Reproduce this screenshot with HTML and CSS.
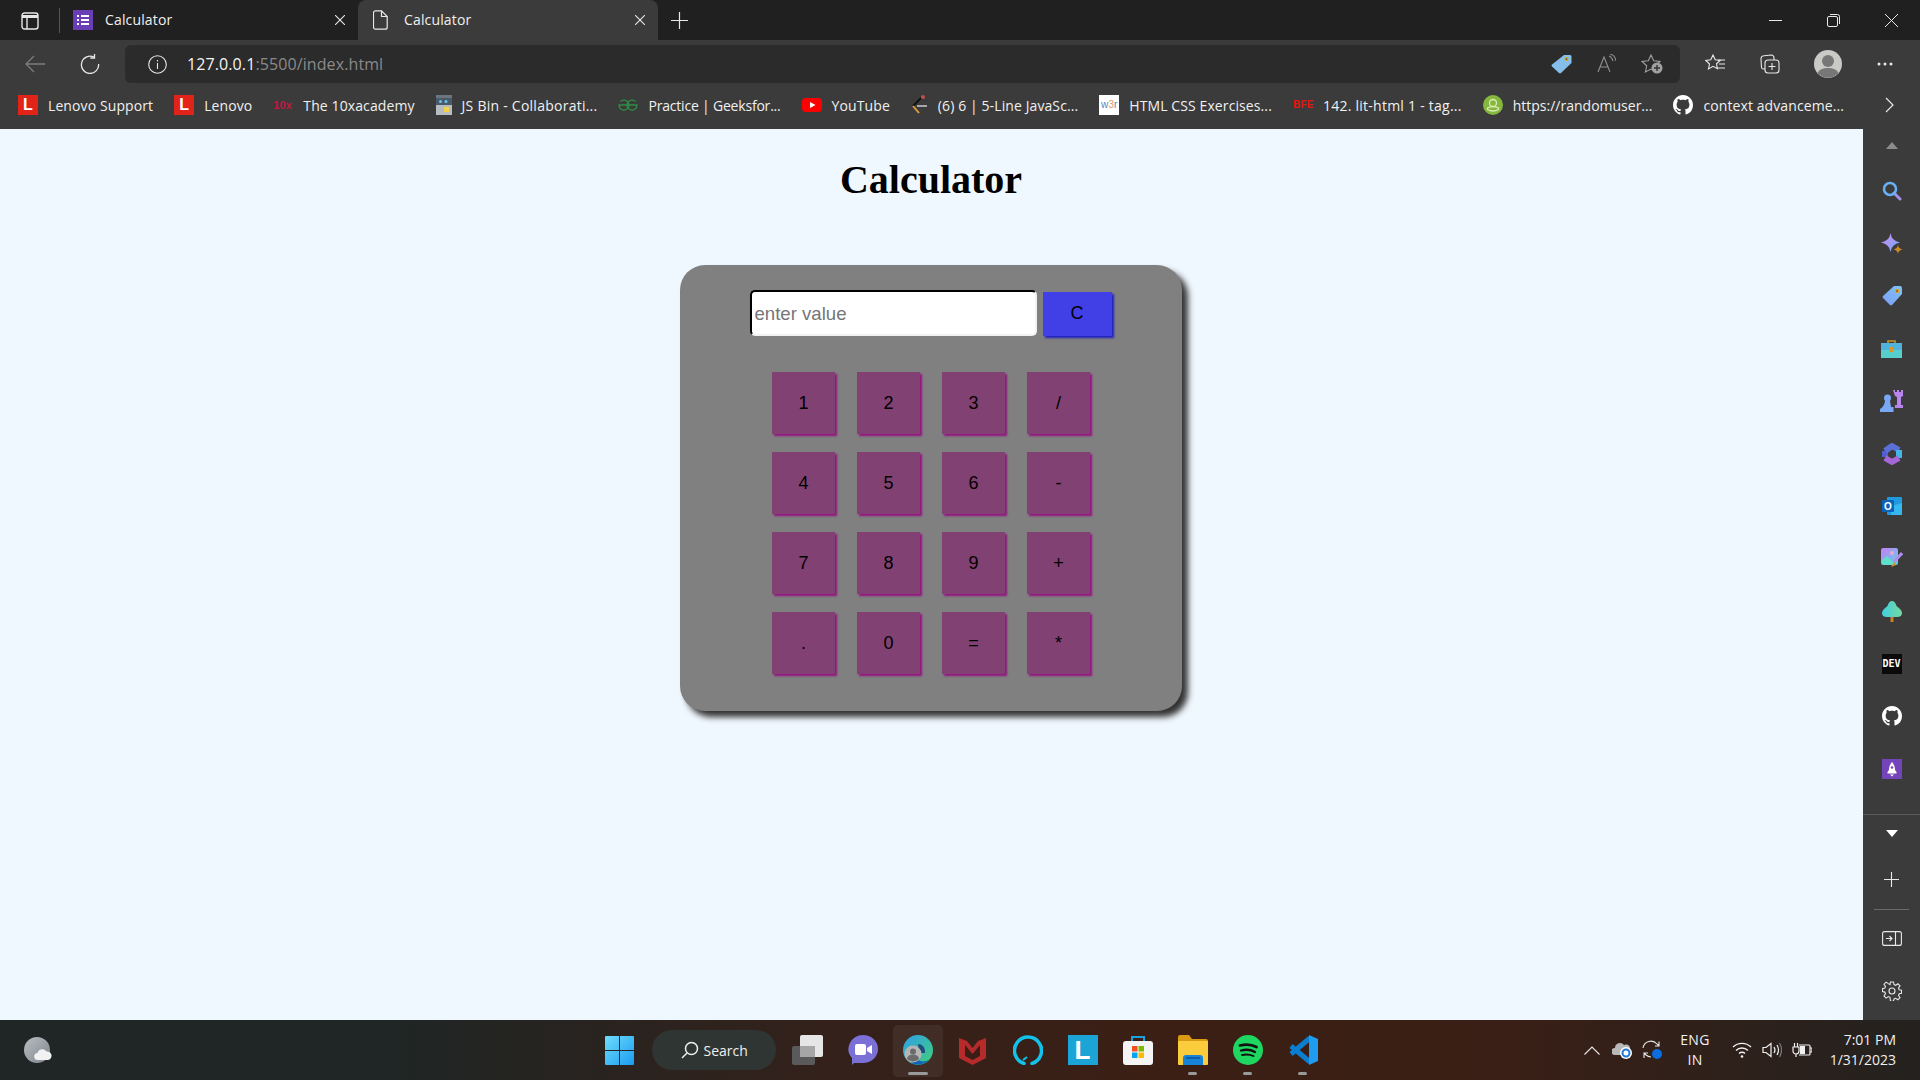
FILE: index.html
```html
<!DOCTYPE html>
<html lang="en">
<head>
    <meta charset="UTF-8">
    <title>Calculator</title>
    <link rel="stylesheet" href="styles.css">
</head>
<body>
    <div class="tabstrip">
        <div class="tab-toggle">
            <svg width="18" height="18" viewBox="0 0 18 18" fill="none" stroke="#e6e6e6" stroke-width="1.4"><rect x="1" y="1" width="16" height="16" rx="2.5"/><path d="M1 4.5h16" stroke-width="3"/><path d="M6 5v12"/></svg>
        </div>
        <div class="tab">
            <svg width="20" height="20" viewBox="0 0 20 20"><rect width="20" height="20" fill="#6a3fb5"/><path d="M4 5h2v2H4zM8 5h8v2H8zM4 9h2v2H4zM8 9h8v2H8zM4 13h2v2H4zM8 13h8v2H8z" fill="#fff"/></svg>
            <span class="tab-title">Calculator</span>
            <svg class="tab-close" width="10" height="10" viewBox="0 0 10 10" stroke="#e8e8e8" stroke-width="1.1"><path d="M0 0l10 10M10 0L0 10"/></svg>
        </div>
        <div class="tab tab-active">
            <svg width="15" height="20" viewBox="0 0 15 20" fill="none" stroke="#e8e8e8" stroke-width="1.2"><path d="M2.5.8h6l5.7 5.7v10.7a2 2 0 0 1-2 2H2.5a2 2 0 0 1-2-2V2.8a2 2 0 0 1 2-2z"/><path d="M8.5.8v5.7h5.7"/></svg>
            <span class="tab-title">Calculator</span>
            <svg class="tab-close" width="10" height="10" viewBox="0 0 10 10" stroke="#e8e8e8" stroke-width="1.1"><path d="M0 0l10 10M10 0L0 10"/></svg>
        </div>
        <svg class="tab-new" width="17" height="17" viewBox="0 0 17 17" stroke="#e8e8e8" stroke-width="1.2"><path d="M8.5 0v17M0 8.5h17"/></svg>
        <div class="win-controls">
            <svg width="13" height="13" viewBox="0 0 13 13" stroke="#e8e8e8"><path d="M0 6.5h13"/></svg>
            <svg width="13" height="13" viewBox="0 0 13 13" fill="none" stroke="#e8e8e8"><rect x=".5" y="2.5" width="10" height="10" rx="1.5"/><path d="M3 .5h7.5a2 2 0 0 1 2 2V10"/></svg>
            <svg width="13" height="13" viewBox="0 0 13 13" stroke="#e8e8e8"><path d="M0 0l13 13M13 0L0 13"/></svg>
        </div>
    </div>

    <div class="toolbar">
        <svg class="tb-back" width="20" height="20" viewBox="0 0 20 20" fill="none" stroke="#7d7d7d" stroke-width="1.3"><path d="M20 10H1M9 2l-8 8 8 8"/></svg>
        <svg class="tb-reload" width="20" height="20" viewBox="0 0 20 20" fill="none" stroke="#e8e8e8" stroke-width="1.3"><path d="M14 3.2A8.6 8.6 0 1 0 18.6 10"/><path d="M14.5 0v4h-4.2"/></svg>
        <div class="omnibox">
            <svg width="19" height="19" viewBox="0 0 19 19" fill="none" stroke="#e8e8e8" stroke-width="1.1"><circle cx="9.5" cy="9.5" r="8.8"/><path d="M9.5 8v6M9.5 5v1.5"/></svg>
            <span class="url"><span class="url-host">127.0.0.1</span>:5500/index.html</span>
            <div class="omni-right">
                <svg width="21" height="20" viewBox="0 0 21 20"><path d="M13 1h6a1.500 1.500 0 0 1 1.500 1.500V9L10 19a1.500 1.500 0 0 1-2 0L1 12.500a1.500 1.500 0 0 1 0-2z" fill="#85bdeb"/><circle cx="15.500" cy="5" r="2" fill="#e0a800"/><circle cx="15.500" cy="5" r=".8" fill="#333"/></svg>
                <svg width="19" height="20" viewBox="0 0 19 20" fill="none" stroke="#8f8f8f" stroke-width="1.100"><path d="M1 18L7 3l6 15M3 13h8M12 2q3 1 4 5M13 0q5 1 6 7"/></svg>
                <svg width="22" height="20" viewBox="0 0 22 20" fill="none" stroke="#a0a0a0" stroke-width="1.100"><path d="M10 1l2.700 5.800 6.300.7-4.700 4.300 1.300 6.200L10 15l-5.600 3 1.300-6.200L1 7.500l6.300-.7z"/><circle cx="16" cy="14" r="5.500" fill="#a0a0a0" stroke="none"/><path d="M16 11v6M13 14h6" stroke="#333" stroke-width="1.400"/></svg>
            </div>
        </div>
        <svg class="tb-right" width="20" height="20" viewBox="0 0 20 20" fill="none" stroke="#e8e8e8" stroke-width="1.100"><path d="M8 1l2.200 4.800 5 .6-3.700 3.400 1 5L8 12.300 3.500 15l1-5L.8 6.400l5-.6z"/><path d="M13 6h7M14 10h6M13 14h7"/></svg>
        <svg class="tb-right" width="20" height="20" viewBox="0 0 20 20" fill="none" stroke="#e8e8e8" stroke-width="1.100"><rect x="5" y="6" width="14" height="13" rx="3"/><path d="M12 9v7M8.500 12.500h7"/><path d="M5 15H3.500a2 2 0 0 1-2-1.800L1 5a3 3 0 0 1 3-3.300L11 1a3 3 0 0 1 3 3v2"/></svg>
        <svg class="tb-avatar" width="28" height="28" viewBox="0 0 28 28"><circle cx="14" cy="14" r="14" fill="#c9c9c6"/><circle cx="14" cy="11" r="6" fill="#777"/><path d="M3.500 23a11 7 0 0 1 21 0A14 14 0 0 1 3.500 23z" fill="#777"/></svg>
        <svg class="tb-right" width="16" height="4" viewBox="0 0 16 4" fill="#e8e8e8"><circle cx="2" cy="2" r="1.500"/><circle cx="8" cy="2" r="1.500"/><circle cx="14" cy="2" r="1.500"/></svg>
    </div>

    <div class="bookmarks">
        <a class="bm"><span class="bm-lenovo">L</span>Lenovo Support</a>
        <a class="bm"><span class="bm-lenovo">L</span>Lenovo</a>
        <a class="bm"><span class="bm-10x">10x</span>The 10xacademy</a>
        <a class="bm bm-loose"><svg width="16" height="20" viewBox="0 0 16 20"><rect width="16" height="20" fill="#b5bcc2"/><rect y="0" width="16" height="3" fill="#6b7680"/><rect y="3" width="16" height="7" fill="#4a5a68"/><circle cx="4.500" cy="6.500" r="1.500" fill="#62c6f0"/><circle cx="10" cy="6.500" r="1.500" fill="#62c6f0"/><rect x="8" y="12" width="5" height="5" fill="#f2d24a"/></svg>JS Bin - Collaborati...</a>
        <a class="bm bm-tight"><svg width="20" height="20" viewBox="0 0 20 20" fill="none" stroke="#2f8d46" stroke-width="1.300"><path d="M10 10h9a5 5 0 1 1-1.500-3.500"/><path d="M10 10H1a5 5 0 1 0 1.500-3.500"/></svg>Practice | Geeksfor...</a>
        <a class="bm"><svg width="20" height="20" viewBox="0 0 20 20"><rect y="3" width="20" height="14" rx="4" fill="#f00"/><path d="M8 7l5.500 3L8 13z" fill="#fff"/></svg>YouTube</a>
        <a class="bm"><svg width="17" height="20" viewBox="0 0 17 20" fill="none" stroke-width="1.800"><path d="M10 3L2 11" stroke="#111"/><path d="M2 11l6 7" stroke="#e8a33d"/><path d="M6 11h10" stroke="#b5b5b5"/><circle cx="12" cy="2" r="2" fill="#c0504d"/></svg>(6) 6 | 5-Line JavaSc...</a>
        <a class="bm"><span class="bm-w3">w<i>3</i>r</span>HTML CSS Exercises...</a>
        <a class="bm bm-loose"><span class="bm-bfe">BFE</span>142. lit-html 1 - tag...</a>
        <a class="bm bm-even"><svg width="20" height="20" viewBox="0 0 20 20"><circle cx="10" cy="10" r="10" fill="#86b83f"/><circle cx="10" cy="8" r="3.500" fill="none" stroke="#d8ecb4" stroke-width="1.300"/><path d="M4.500 13q5.500-3 11 0v1.500q-5.500 3-11 0z" fill="none" stroke="#d8ecb4" stroke-width="1.300"/></svg>https://randomuser...</a>
        <a class="bm"><svg width="20" height="20" viewBox="0 0 16 16" fill="#fff"><path d="M8 0C3.580 0 0 3.580 0 8c0 3.540 2.290 6.530 5.470 7.590.4.07.55-.17.55-.38 0-.19-.01-.82-.01-1.490-2.010.37-2.530-.49-2.690-.94-.09-.23-.48-.94-.82-1.130-.28-.15-.68-.52-.01-.53.63-.01 1.080.58 1.230.82.72 1.210 1.870.87 2.330.66.07-.52.28-.87.51-1.070-1.780-.2-3.640-.89-3.640-3.950 0-.87.31-1.590.82-2.150-.08-.2-.36-1.020.08-2.120 0 0 .67-.21 2.200.82.64-.18 1.320-.27 2-.27.68 0 1.360.09 2 .27 1.530-1.040 2.200-.82 2.200-.82.44 1.100.16 1.920.08 2.120.51.56.82 1.270.82 2.150 0 3.070-1.870 3.750-3.650 3.950.29.25.54.73.54 1.480 0 1.070-.01 1.930-.01 2.200 0 .21.15.46.55.38A8.013 8.013 0 0016 8c0-4.420-3.580-8-8-8z"/></svg>context advanceme...</a>
        <svg class="bm-more" width="14" height="16" viewBox="0 0 14 16" fill="none" stroke="#e8e8e8" stroke-width="1.200"><path d="M3 1l7 7-7 7"/></svg>
    </div>

    <div class="main">
        <div class="page">
            <h1>Calculator</h1>
            <div class="calc">
                <div class="calc-top">
                    <input class="calc-input" type="text" placeholder="enter value">
                    <button class="calc-clear">C</button>
                </div>
                <div class="calc-keys">
                    <button>1</button><button>2</button><button>3</button><button>/</button>
                    <button>4</button><button>5</button><button>6</button><button>-</button>
                    <button>7</button><button>8</button><button>9</button><button>+</button>
                    <button>.</button><button>0</button><button>=</button><button>*</button>
                </div>
            </div>
        </div>
        <div class="sidebar">
            <div class="side-up"><svg width="12" height="7" viewBox="0 0 12 7" fill="#8c8c8c"><path d="M6 0l6 7H0z"/></svg></div>
            <div class="side-list">
                <div class="side-item"><svg width="20" height="20" viewBox="0 0 20 20" fill="none"><path d="M12 12l6 6" stroke="#a58fe6" stroke-width="3" stroke-linecap="round"/><circle cx="8" cy="8" r="6" stroke="#67b1f5" stroke-width="2.500"/></svg></div>
                <div class="side-item"><svg width="22" height="22" viewBox="0 0 22 22"><defs><linearGradient id="spark" x1="0" y1="0" x2="1" y2="1"><stop offset="0" stop-color="#d08cf2"/><stop offset="1" stop-color="#6fa8f7"/></linearGradient></defs><path d="M9.500 0q1 8 9.500 9.500-8.500 1.500-9.500 9.500-1-8-9.500-9.500Q8.500 8 9.500 0z" fill="url(#spark)"/><path d="M17 12q.5 3.500 4.500 4.500-4 .5-4.500 4.500-.5-4-4.500-4.500 4-1 4.500-4.500z" fill="#c98a1f"/></svg></div>
                <div class="side-item"><svg width="20" height="20" viewBox="0 0 20 20"><defs><linearGradient id="tag" x1="1" y1="0" x2="0" y2="1"><stop offset="0" stop-color="#7cc4f4"/><stop offset="1" stop-color="#7f9cf5"/></linearGradient></defs><path d="M12 0h6a2 2 0 0 1 2 2v6L10 19a1.500 1.500 0 0 1-2 0L1 12a1.500 1.500 0 0 1 0-2z" fill="url(#tag)"/><circle cx="15" cy="5" r="2.200" fill="#e0a020"/><circle cx="15" cy="5" r=".8" fill="#333"/></svg></div>
                <div class="side-item"><svg width="21" height="20" viewBox="0 0 21 20"><path d="M7 5V2h7v3" fill="none" stroke="#c9962a" stroke-width="1.600"/><rect y="4" width="21" height="7" fill="#4fb3dc"/><rect y="11" width="21" height="8" fill="#57d0cd"/><rect x="9" y="8" width="3" height="5" fill="#d8972a"/></svg></div>
                <div class="side-item"><svg width="23" height="23" viewBox="0 0 23 23"><path d="M13 0h2v2h2V0h2v2h2V0h2v6l-2 1v8h2v3h-8v-3h2V7l-2-1z" fill="#b884ee"/><circle cx="7.500" cy="8" r="3.500" fill="#79a9f4"/><path d="M5 11h5l1 6h2.500v5H0v-3q4-2 5-8z" fill="#79a9f4"/></svg></div>
                <div class="side-item"><svg width="20" height="22" viewBox="0 0 20 22" fill="none" stroke-width="6" stroke-linejoin="round"><path d="M3 14V8" stroke="#4f5fd0"/><path d="M3 8l7-5 7 4" stroke="#5a6fd8"/><path d="M17 7v8" stroke="#45b4e8"/><path d="M17 15l-7 4-7-4" stroke="#a566d8"/></svg></div>
                <div class="side-item"><svg width="20" height="20" viewBox="0 0 20 20"><rect x="5" y="1" width="15" height="18" rx="1" fill="#1f9ae0"/><path d="M9 10l11-3v12H9z" fill="#35b8f0"/><rect y="4" width="12" height="12" rx="1" fill="#0a63b8"/><text x="6" y="13.500" class="side-o">O</text></svg></div>
                <div class="side-item"><svg width="22" height="22" viewBox="0 0 22 22"><defs><linearGradient id="pic" x1="0" y1="0" x2="1" y2="1"><stop offset="0" stop-color="#c77ef5"/><stop offset="1" stop-color="#5fd0e8"/></linearGradient></defs><rect width="17" height="17" rx="2" fill="url(#pic)"/><circle cx="11" cy="5" r="2" fill="#f0a8d8"/><path d="M0 13l6-5 7 7v2H2z" fill="#5fe0c8"/><path d="M21 5l-8 9" stroke="#b08cf0" stroke-width="3"/><path d="M13 14l-3 5 5-2z" fill="#d89430"/></svg></div>
                <div class="side-item"><svg width="20" height="21" viewBox="0 0 20 21"><defs><linearGradient id="tree" x1="0" y1="0" x2="1" y2="0"><stop offset="0" stop-color="#3fd0e0"/><stop offset="1" stop-color="#78d8a0"/></linearGradient></defs><rect x="8.500" y="14" width="3" height="7" fill="#c9822a"/><path d="M10 0q3 0 4.500 5 5.500 4 5.500 7 0 4-5 4H5q-5 0-5-4 0-3 5.500-7Q7 0 10 0z" fill="url(#tree)"/></svg></div>
                <div class="side-item"><span class="side-dev">DEV</span></div>
                <div class="side-item"><svg width="20" height="20" viewBox="0 0 16 16" fill="#fff"><path d="M8 0C3.580 0 0 3.580 0 8c0 3.540 2.290 6.530 5.470 7.590.4.07.55-.17.55-.38 0-.19-.01-.82-.01-1.490-2.010.37-2.530-.49-2.690-.94-.09-.23-.48-.94-.82-1.130-.28-.15-.68-.52-.01-.53.63-.01 1.080.58 1.230.82.72 1.210 1.870.87 2.330.66.07-.52.28-.87.51-1.070-1.780-.2-3.640-.89-3.640-3.950 0-.87.31-1.590.82-2.150-.08-.2-.36-1.020.08-2.120 0 0 .67-.21 2.200.82.64-.18 1.320-.27 2-.27.68 0 1.360.09 2 .27 1.530-1.040 2.200-.82 2.200-.82.44 1.100.16 1.920.08 2.120.51.56.82 1.270.82 2.150 0 3.070-1.870 3.750-3.650 3.950.29.25.54.73.54 1.480 0 1.070-.01 1.930-.01 2.200 0 .21.15.46.55.38A8.013 8.013 0 0016 8c0-4.420-3.580-8-8-8z"/></svg></div>
                <div class="side-item"><svg width="20" height="20" viewBox="0 0 20 20"><rect width="20" height="20" fill="#7445ba"/><path d="M10 3q3 3 3 8l1.500 2v1.500h-9V13L7 11q0-5 3-8z" fill="#fff"/><circle cx="10" cy="8.500" r="1.300" fill="#7445ba"/><path d="M8 15.500h4L10 17.500z" fill="#fff"/></svg></div>
            </div>
            <div class="side-more"><svg width="12" height="7" viewBox="0 0 12 7" fill="#fff"><path d="M0 0h12L6 7z"/></svg></div>
            <div class="side-add"><svg width="15" height="15" viewBox="0 0 15 15" stroke="#e8e8e8" stroke-width="1.100"><path d="M7.500 0v15M0 7.500h15"/></svg></div>
            <div class="side-sep"></div>
            <div class="side-panel"><svg width="20" height="15" viewBox="0 0 20 15" fill="none" stroke="#e8e8e8" stroke-width="1.100"><rect x=".6" y=".6" width="18.800" height="13.800" rx="2"/><path d="M13.500 1v13M4 7.500h6M7.500 5l2.500 2.500L7.500 10"/></svg></div>
            <div class="side-gear"><svg width="20" height="20" viewBox="0 0 20 20" fill="none" stroke="#e8e8e8" stroke-width="1.100"><circle cx="10" cy="10" r="3"/><path d="M8.500 1h3l.5 2.600 1.700.7 2.200-1.500 2.100 2.100-1.500 2.200.7 1.700 2.300.5v3l-2.300.5-.7 1.700 1.500 2.200-2.100 2.100-2.200-1.500-1.700.7-.5 2.400h-3L8 16.300l-1.700-.7-2.200 1.500L2 15l1.500-2.200-.7-1.700L.5 10.600v-3l2.300-.5.7-1.700L2 3.200l2.100-2.100 2.200 1.500L8 3.600z"/></svg></div>
        </div>
    </div>

    <div class="taskbar">
        <div class="task-left">
            <svg width="28" height="26" viewBox="0 0 28 26"><defs><linearGradient id="moon" x1="0" y1="0" x2="1" y2="1"><stop offset="0" stop-color="#b9bec4"/><stop offset="1" stop-color="#7f858d"/></linearGradient></defs><circle cx="13" cy="13" r="13" fill="url(#moon)"/><path d="M14 23a3.500 3.500 0 0 1-.5-7 5 5 0 0 1 9-1.500 4.300 4.300 0 0 1 1.500 8.500z" fill="#f2f2f2"/></svg>
        </div>
        <div class="task-center">
            <svg class="task-start" width="29" height="29" viewBox="0 0 29 29"><defs><linearGradient id="win" x1="0" y1="0" x2="1" y2="1"><stop offset="0" stop-color="#6fdcfb"/><stop offset="1" stop-color="#1a9cf0"/></linearGradient></defs><path d="M0 1a1 1 0 0 1 1-1h13v14H0zM15 0h13a1 1 0 0 1 1 1v13H15zM0 15h14v14H1a1 1 0 0 1-1-1zM15 15h14v13a1 1 0 0 1-1 1H15z" fill="url(#win)"/></svg>
            <div class="task-search">
                <svg width="18" height="18" viewBox="0 0 18 18" fill="none" stroke="#f0f0f0" stroke-width="1.500"><circle cx="10.500" cy="7.500" r="6"/><path d="M6 12l-5 5"/></svg>
                Search
            </div>
            <div class="task-apps">
                <div class="app"><svg width="31" height="30" viewBox="0 0 31 30"><rect y="11" width="23" height="19" rx="2" fill="#5a5a5a"/><rect x="8" width="23" height="22" rx="2" fill="#e6e6e6"/><rect x="8" y="11" width="15" height="11" fill="#a6a6a6"/></svg></div>
                <div class="app"><svg width="30" height="30" viewBox="0 0 30 30"><path d="M15 0a15 14 0 0 1 0 28H6l-2 2v-7A15 14 0 0 1 15 0z" fill="#7b70d6"/><rect x="7" y="9" width="11" height="11" rx="2" fill="#fff"/><path d="M19 13l5-3v9l-5-3z" fill="#fff"/></svg></div>
                <div class="app app-open app-on"><svg width="30" height="30" viewBox="0 0 30 30"><defs><linearGradient id="edge" x1="0" y1="0" x2="1" y2="1"><stop offset="0" stop-color="#2f9fe8"/><stop offset="1" stop-color="#3fd07a"/></linearGradient></defs><circle cx="15" cy="15" r="15" fill="url(#edge)"/><path d="M15 9a7 7 0 0 1 7 7v2h-6z" fill="#1c4f7a"/><path d="M8 28a15 15 0 0 0 18-3c-5 2-9 2-12-1z" fill="#1364b8"/><circle cx="10" cy="19" r="8.500" fill="#b5b5b5"/><circle cx="10" cy="16.500" r="3" fill="#6b6b6b"/><path d="M4 24a6 4.500 0 0 1 12 0 8.500 8.500 0 0 1-12 0z" fill="#6b6b6b"/></svg></div>
                <div class="app"><svg width="27" height="30" viewBox="0 0 27 30"><path d="M0 3l8 3 5.500 7L19 6l8-3v20l-13.500 7L0 23z" fill="#b52a2a"/><path d="M6 10v11l7.500 4 7.500-4V10l-7.500 9z" fill="#3a1e16"/></svg></div>
                <div class="app"><svg width="30" height="30" viewBox="0 0 30 30" fill="none"><path d="M11 28.500A13.500 13.500 0 1 1 19 28.500" stroke="#12c2ea" stroke-width="3.500" stroke-linecap="round"/><path d="M10 25l4-3" stroke="#12c2ea" stroke-width="2"/></svg></div>
                <div class="app app-l"><span>L</span></div>
                <div class="app"><svg width="30" height="30" viewBox="0 0 30 30"><path d="M9 7V2h12v5" fill="none" stroke="#1ba0e2" stroke-width="2"/><rect y="6" width="30" height="24" rx="3" fill="#f4f4f4"/><rect x="9" y="11" width="5.500" height="5.500" fill="#f25022"/><rect x="15.500" y="11" width="5.500" height="5.500" fill="#7fba00"/><rect x="9" y="17.500" width="5.500" height="5.500" fill="#00a4ef"/><rect x="15.500" y="17.500" width="5.500" height="5.500" fill="#ffb900"/></svg></div>
                <div class="app app-open"><svg width="30" height="30" viewBox="0 0 30 30"><path d="M0 2a2 2 0 0 1 2-2h9l3 4h14a2 2 0 0 1 2 2v2H0z" fill="#d99a15"/><rect y="6" width="30" height="24" rx="1" fill="#fbcc3b"/><path d="M5 30v-7a3 3 0 0 1 3-3h14a3 3 0 0 1 3 3v7z" fill="#1683d8"/><rect x="8" y="22" width="14" height="2" fill="#0d5ea8"/></svg></div>
                <div class="app app-open"><svg width="30" height="30" viewBox="0 0 30 30" fill="none" stroke="#111" stroke-linecap="round"><circle cx="15" cy="15" r="15" fill="#1ed760" stroke="none"/><path d="M7 10.500q9-2.500 16.500 1.500" stroke-width="2.800"/><path d="M8 15.500q8-2 14 1.500" stroke-width="2.300"/><path d="M9 20q6-1.500 11.500 1" stroke-width="1.900"/></svg></div>
                <div class="app app-open"><svg width="31" height="30" viewBox="0 0 31 30" fill="none"><path d="M23 3L4 19M23 27L4 11" stroke="#0a7ed0" stroke-width="5"/><path d="M22 0l9 4v22l-9 4z" fill="#1f9cf0"/></svg></div>
            </div>
        </div>
        <div class="task-tray">
            <svg class="tray-chevron" width="16" height="9" viewBox="0 0 16 9" fill="none" stroke="#e8e8e8" stroke-width="1.100"><path d="M.5 8.500L8 1l7.500 7.500"/></svg>
            <svg width="20" height="18" viewBox="0 0 20 18"><path d="M3 14a3.500 3.500 0 0 1 0-7 5 5 0 0 1 9-3 4 4 0 0 1 6 3v7z" fill="#b8b8b8"/><circle cx="14" cy="12" r="6" fill="#fff"/><circle cx="14" cy="12" r="3.500" fill="none" stroke="#1f78d8" stroke-width="2"/></svg>
            <svg width="20" height="20" viewBox="0 0 20 20" fill="none" stroke="#e8e8e8" stroke-width="1.100"><path d="M1 8a8 8 0 0 1 14-4l2 2M17 1.500V6h-4"/><path d="M9 17a8 8 0 0 1-5-2l-2-2M2 18v-5h4"/><circle cx="15" cy="14" r="5" fill="#0a6ee0" stroke="none"/></svg>
            <div class="tray-lang">ENG<br>IN</div>
            <svg width="20" height="16" viewBox="0 0 20 16" fill="none" stroke="#f0f0f0" stroke-width="1.400"><path d="M1 5a13 13 0 0 1 18 0M4 8.500a8.500 8.500 0 0 1 12 0M7 11.500a4.200 4.200 0 0 1 6 0"/><circle cx="10" cy="14.500" r="1.300" fill="#f0f0f0" stroke="none"/></svg>
            <svg width="20" height="16" viewBox="0 0 20 16" fill="none" stroke="#f0f0f0" stroke-width="1.200"><path d="M1 5.500h3L9 1.500v13l-5-4H1z"/><path d="M12 5q2 3 0 6"/><path d="M15 3q3 5 0 10"/><path d="M17.500 1q4 7 0 14" stroke="#777"/></svg>
            <svg width="20" height="16" viewBox="0 0 20 16" fill="none" stroke="#f0f0f0" stroke-width="1.200"><path d="M7 3h10a1 1 0 0 1 1 1v8a1 1 0 0 1-1 1H7M18 6h2v4h-2"/><path d="M1 5h6v4a3 3 0 0 1-6 0zM2.500 1v4M5.500 1v4M4 12v3"/><rect x="8" y="4" width="5" height="8" fill="#f0f0f0" stroke="none"/></svg>
            <div class="tray-clock">7:01 PM<br>1/31/2023</div>
        </div>
    </div>
</body>
</html>
```

FILE: styles.css
```css
* {
    box-sizing: border-box;
}
body {
    margin: 0;
    height: 1080px;
    overflow: hidden;
    display: flex;
    flex-direction: column;
    font-family: "Open Sans", sans-serif;
    font-size: 14px;
    color: #f0f0f0;
    background-color: #3b3b3b;
}
svg {
    flex: none;
    display: block;
}

/* tab strip */
.tabstrip {
    height: 40px;
    display: flex;
    align-items: center;
    background-color: #202020;
}
.tab-toggle {
    width: 60px;
    height: 25px;
    padding: 4px 0 0 21px;
    border-right: 1px solid #555;
}
.tab {
    width: 298px;
    height: 40px;
    padding: 0 13px 1px 13px;
    display: flex;
    align-items: center;
    gap: 12px;
}
.tab-title {
    letter-spacing: 0.15px;
}
.tab-close {
    margin-left: auto;
}
.tab-active {
    width: 300px;
    padding-left: 15px;
    gap: 16px;
    background-color: #3b3b3b;
    border-radius: 8px 8px 0 0;
}
.tab-new {
    margin-left: 13px;
}
.win-controls {
    margin-left: auto;
    padding-right: 22px;
    display: flex;
    gap: 45px;
}

/* toolbar */
.toolbar {
    height: 43px;
    padding-top: 5px;
    display: flex;
    align-items: center;
}
.tb-back {
    margin-left: 25px;
}
.tb-reload {
    margin-left: 35px;
}
.omnibox {
    width: 1555px;
    height: 38px;
    margin-left: 25px;
    padding: 0 17px 0 23px;
    display: flex;
    align-items: center;
    border-radius: 6px;
    background-color: #2b2b2b;
}
.url {
    margin-left: 20px;
    font-size: 16px;
    letter-spacing: 0.1px;
    color: #8a8a8a;
}
.url-host {
    color: #f5f5f5;
}
.omni-right {
    margin-left: auto;
    display: flex;
    align-items: center;
    gap: 25px;
}
.tb-right {
    margin-left: 25px;
}
.tb-right + .tb-right {
    margin-left: 35px;
}
.tb-avatar {
    margin-left: 34px;
}
.tb-avatar + .tb-right {
    margin-left: 35px;
}

/* bookmarks bar */
.bookmarks {
    height: 46px;
    padding: 0 0 2px 18px;
    display: flex;
    align-items: center;
    gap: 21px;
}
.bm {
    display: flex;
    align-items: center;
    gap: 10px;
    letter-spacing: 0.1px;
    white-space: nowrap;
}
.bm-loose {
    letter-spacing: 0.25px;
}
.bm-tight {
    letter-spacing: -0.2px;
}
.bm-even {
    letter-spacing: 0;
}
.bm-lenovo {
    width: 20px;
    height: 20px;
    font: bold 16px/20px "Liberation Sans", sans-serif;
    text-align: center;
    color: #fff;
    background-color: #e2231a;
}
.bm-10x {
    width: 20px;
    font: bold 11px/20px "Liberation Sans", sans-serif;
    color: #c01840;
}
.bm-w3 {
    width: 20px;
    height: 20px;
    font: 10px/20px "Liberation Sans", sans-serif;
    text-align: center;
    color: #5b84c4;
    background-color: #fff;
}
.bm-w3 i {
    font-style: normal;
    color: #f0945c;
}
.bm-bfe {
    width: 20px;
    font: bold 10px/20px "Liberation Sans", sans-serif;
    color: #e3170a;
}
.bm-more {
    margin-left: auto;
    margin-right: 23px;
}

/* page area */
.main {
    flex: 1;
    display: flex;
    min-height: 0;
}
.page {
    flex: 1;
    padding-right: 1px;
    background-color: aliceblue;
}
h1 {
    margin: 26px 0 0;
    height: 110px;
    font: bold 40px/50px "Liberation Serif", serif;
    text-align: center;
    color: #000;
}
.calc {
    width: 502px;
    height: 446px;
    margin: 0 auto;
    padding-top: 25px;
    display: flex;
    flex-direction: column;
    align-items: center;
    gap: 36px;
    border-radius: 25px;
    background-color: gray;
    box-shadow: 6px 6px 6px #333;
}
.calc-top {
    padding-right: 1px;
    display: flex;
    align-items: flex-end;
    gap: 6px;
}
.calc-input {
    width: 287px;
    height: 46px;
    padding: 3px 3px 1px;
    font: 18.6px "Liberation Sans", sans-serif;
    border-width: 2px;
    border-style: inset;
    border-color: #1f1f1f #f2f2f2 #f2f2f2 #1f1f1f;
    border-radius: 5px;
    background-color: #fff;
}
button {
    padding: 0;
    border: none;
    font: 18px "Liberation Sans", sans-serif;
    color: #000;
}
.calc-clear {
    width: 69px;
    height: 44px;
    padding-bottom: 2px;
    background-color: #4040e6;
    box-shadow: 2px 2px 2px #1f1fc0;
}
.calc-keys {
    display: grid;
    grid-template-columns: repeat(4, 63px);
    grid-auto-rows: 62px;
    gap: 18px 22px;
}
.calc-keys button {
    background-color: #814172;
    box-shadow: 2px 2px 2px #93107f;
}

/* edge sidebar */
.sidebar {
    width: 57px;
    display: flex;
    flex-direction: column;
    align-items: center;
    background-color: #3b3b3b;
}
.side-up {
    height: 36px;
    padding-bottom: 4px;
    display: flex;
    align-items: center;
}
.side-list {
    width: 100%;
    height: 650px;
    border-bottom: 1px solid #5a5a5a;
}
.side-item {
    height: 52.5px;
    display: flex;
    align-items: center;
    justify-content: center;
}
.side-o {
    font: bold 10px "Liberation Sans", sans-serif;
    text-anchor: middle;
    fill: #fff;
}
.side-dev {
    width: 20px;
    height: 20px;
    font: bold 10px/20px "DejaVu Sans Mono", monospace;
    text-align: center;
    color: #fff;
    background-color: #0a0a0a;
}
.side-more {
    height: 36px;
    display: flex;
    align-items: center;
}
.side-add {
    height: 56px;
    display: flex;
    align-items: center;
}
.side-sep {
    width: 35px;
    height: 1px;
    margin-top: 2px;
    background-color: #6a6a6a;
}
.side-panel {
    height: 56px;
    display: flex;
    align-items: center;
}
.side-gear {
    height: 50px;
    display: flex;
    align-items: center;
}

/* windows taskbar */
.taskbar {
    height: 60px;
    display: grid;
    grid-template-columns: 1fr auto 1fr;
    align-items: center;
    background: linear-gradient(90deg, #1f2625 0%, #1f2625 20%, #33211b 42%, #3b1f15 60%, #3a1f16 78%, #24221f 100%);
}
.task-left {
    padding-left: 24px;
}
.task-center {
    padding-left: 2px;
    display: flex;
    align-items: center;
}
.task-start {
    margin-right: 18px;
}
.task-search {
    width: 124px;
    height: 40px;
    padding-left: 29px;
    display: flex;
    align-items: center;
    gap: 5px;
    border-radius: 20px;
    background-color: #2f3533;
}
.task-apps {
    margin-left: 17px;
    display: flex;
    gap: 25px;
}
.app {
    position: relative;
    width: 30px;
    height: 30px;
    display: flex;
    justify-content: center;
}
.app-open::after {
    content: "";
    position: absolute;
    left: 10px;
    bottom: -10px;
    width: 9px;
    height: 3px;
    border-radius: 2px;
    background-color: #9a9a9a;
}
.app-on::before {
    content: "";
    position: absolute;
    inset: -10px -10px -12px -10px;
    border-radius: 5px;
    background-color: rgba(255, 255, 255, 0.06);
}
.app-on svg {
    position: relative;
}
.app-on::after {
    left: 5px;
    width: 20px;
}
.app-l {
    font: bold 26px/30px "Liberation Sans", sans-serif;
    text-align: center;
    color: #fff;
    background-color: #1ba4d6;
}
.task-tray {
    padding-right: 24px;
    display: flex;
    align-items: center;
    justify-content: flex-end;
}
.task-tray svg {
    margin-left: 10px;
}
.task-tray .tray-chevron {
    margin-right: 2px;
}
.tray-lang {
    margin: 0 12px 0 18px;
    text-align: center;
    line-height: 20px;
    letter-spacing: 0.3px;
}
.tray-clock {
    margin-left: 18px;
    text-align: right;
    line-height: 20px;
}
```
